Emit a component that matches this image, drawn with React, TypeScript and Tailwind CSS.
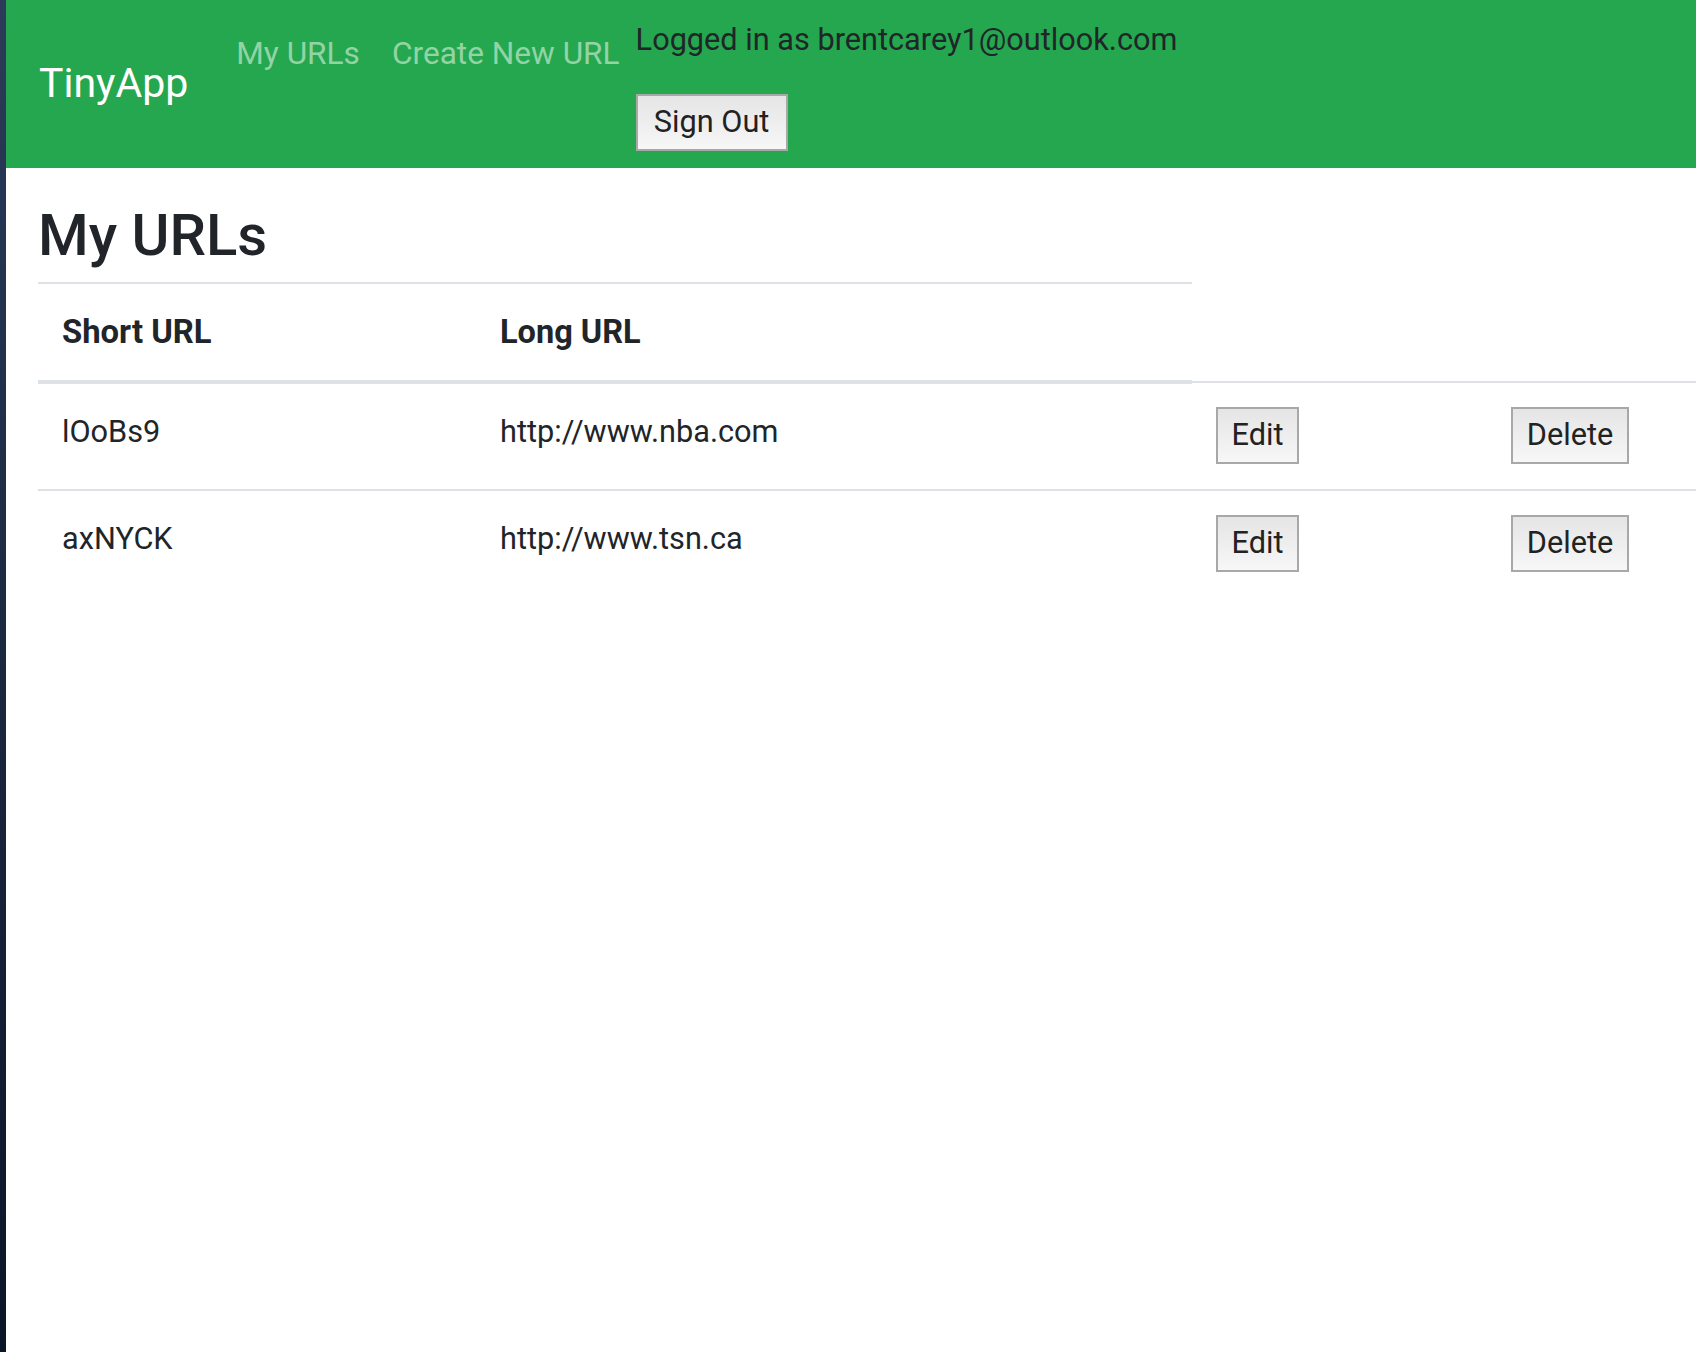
import React from 'react';

const urls = [
  { short: 'lOoBs9', long: 'http://www.nba.com' },
  { short: 'axNYCK', long: 'http://www.tsn.ca' },
];

const font = { fontFamily: 'Roboto, "Liberation Sans", sans-serif' };

const GrayButton = ({ label, width }: { label: string; width: string }) => (
  <button
    className={`${width} h-[57px] flex items-center justify-center border-2 border-[#a8a8a8] bg-gradient-to-b from-[#e5e5e5] to-[#f7f7f7] text-[30.7px] leading-none text-[#222]`}
  >
    {label}
  </button>
);

export default function App() {
  return (
    <div className="flex min-h-[1352px] w-full overflow-hidden text-[#212529]" style={font}>
      <div className="w-[6px] shrink-0 bg-gradient-to-b from-[#2b3b59] to-[#0a1527]" />

      <div className="flex-1 bg-white min-w-0">
        {/* navbar */}
        <nav className="flex items-center bg-[#25a74f] px-[33px] pt-[16px] pb-[17px]">
          <a className="text-[41px] leading-[61px] text-white mr-[32px]">TinyApp</a>
          <ul className="flex self-start">
            <li>
              <a className="block px-[16px] pt-[14px] text-[31.6px] leading-[48px] text-[#92d4a5]">My URLs</a>
            </li>
            <li>
              <a className="block px-[16px] pt-[14px] text-[31.6px] leading-[48px] text-[#92d4a5]">Create New URL</a>
            </li>
          </ul>
          <div className="flex flex-col items-start self-start">
            <span className="text-[30.7px] leading-[48px] text-[#212529]">Logged in as brentcarey1@outlook.com</span>
            <form className="mt-[30px]">
              <GrayButton label="Sign Out" width="w-[152px]" />
            </form>
          </div>
        </nav>

        {/* page */}
        <main className="pl-[32px]">
          <h1 className="mt-[32px] mb-[12px] text-[58px] leading-[70px] font-medium">My URLs</h1>
          <table className="w-[1658px] border-collapse text-[30.7px] leading-[48px] table-fixed">
            <colgroup>
              <col className="w-[438px]" />
              <col className="w-[716px]" />
              <col className="w-[295px]" />
              <col />
            </colgroup>
            <thead>
              <tr>
                <th className="text-left text-[32.8px] font-bold align-bottom px-[24px] py-[24px] border-t-2 border-b-4 border-[#dee2e6]">
                  Short URL
                </th>
                <th className="text-left text-[32.5px] font-bold align-bottom px-[24px] py-[24px] border-t-2 border-b-4 border-[#dee2e6]">
                  Long URL
                </th>
              </tr>
            </thead>
            <tbody>
              {urls.map((u) => (
                <tr key={u.short}>
                  <td className="align-top px-[24px] pt-[24px] pb-[25px] border-t-2 border-[#dee2e6]">{u.short}</td>
                  <td className="align-top px-[24px] pt-[24px] pb-[25px] border-t-2 border-[#dee2e6]">{u.long}</td>
                  <td className="align-top px-[24px] pt-[24px] pb-[25px] border-t-2 border-[#dee2e6]">
                    <form>
                      <GrayButton label="Edit" width="w-[83px]" />
                    </form>
                  </td>
                  <td className="align-top px-[24px] pt-[24px] pb-[25px] border-t-2 border-[#dee2e6]">
                    <form>
                      <GrayButton label="Delete" width="w-[118px]" />
                    </form>
                  </td>
                </tr>
              ))}
            </tbody>
          </table>
        </main>
      </div>
    </div>
  );
}
